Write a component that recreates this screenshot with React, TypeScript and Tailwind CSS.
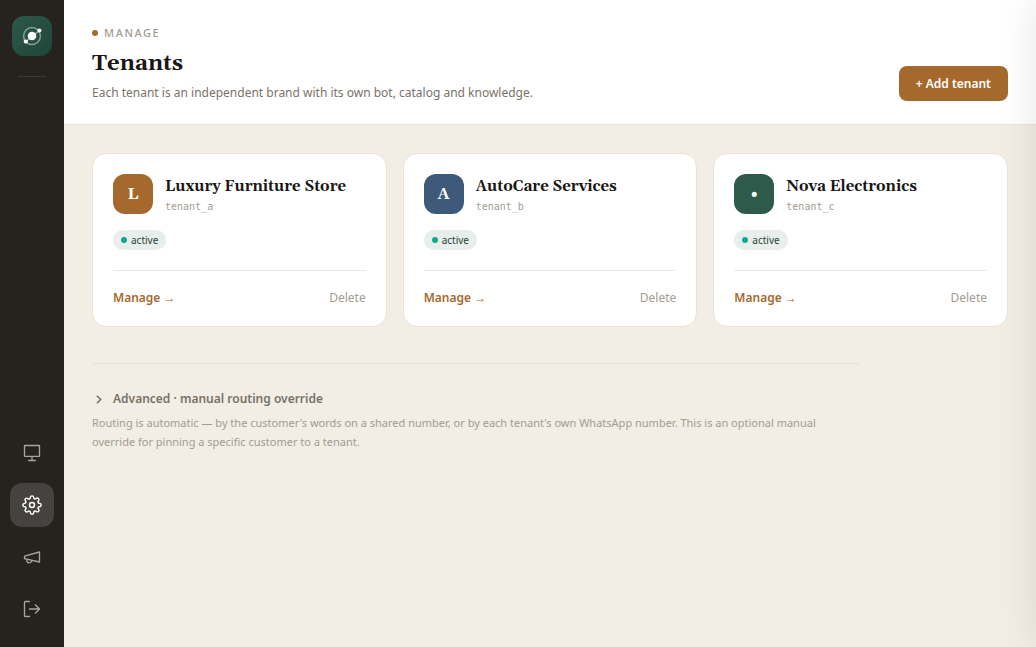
import { useState } from "react";
import { FiSettings } from "react-icons/fi";

type Tenant = {
  id: string;
  name: string;
  initial: string;
  color: string;
};

const tenants: Tenant[] = [
  { id: "tenant_a", name: "Luxury Furniture Store", initial: "L", color: "bg-[#a5692d]" },
  { id: "tenant_b", name: "AutoCare Services", initial: "A", color: "bg-[#3d5a7a]" },
  { id: "tenant_c", name: "Nova Electronics", initial: "•", color: "bg-[#2d5a4a]" },
];

const serif = "font-['Gelasio','Georgia','DejaVu_Serif',serif]";

const iconProps = {
  width: 20,
  height: 20,
  viewBox: "0 0 24 24",
  fill: "none",
  stroke: "currentColor",
  strokeWidth: 1.6,
  strokeLinecap: "round" as const,
  strokeLinejoin: "round" as const,
  "aria-hidden": true,
};

const Logo = () => (
  <svg width="22" height="22" viewBox="0 0 22 22" fill="none" aria-hidden="true">
    <circle cx="11" cy="11" r="8.4" stroke="#fff" strokeOpacity="0.45" strokeWidth="1.5" />
    <path d="M5 16.5 18.5 5.5" stroke="#fff" strokeOpacity="0.6" strokeWidth="1.2" />
    <circle cx="11" cy="11" r="4.3" fill="#fff" />
    <circle cx="18.4" cy="5.5" r="2.1" fill="#fff" />
    <circle cx="4.8" cy="16.6" r="2.1" fill="#fff" />
  </svg>
);

const Sidebar = () => {
  const item = "flex size-11 items-center justify-center rounded-xl text-[#a8a49c]";

  return (
    <aside className="flex w-16 shrink-0 flex-col items-center bg-[#26221d] py-4">
      <a
        href="#home"
        aria-label="Home"
        className="flex size-10 items-center justify-center rounded-xl bg-linear-to-br from-[#2d5a4a] to-[#1f4538]"
      >
        <Logo />
      </a>
      <div className="mt-5 h-px w-7 bg-white/10" />

      <nav className="mt-auto flex flex-col gap-2">
        <a href="#inbox" aria-label="Inbox" className={item}>
          <svg {...iconProps}>
            <rect x="3" y="3" width="18" height="13" rx="0.5" />
            <path d="M12 16v5M8 21h8" />
          </svg>
        </a>
        <a
          href="#manage"
          aria-label="Manage"
          aria-current="page"
          className="flex size-11 items-center justify-center rounded-xl bg-[#454340] text-white"
        >
          <FiSettings size={20} strokeWidth={1.7} />
        </a>
        <a href="#campaigns" aria-label="Campaigns" className={item}>
          <svg {...iconProps}>
            <path d="m3 11 18-5v12L3 14v-3z" />
            <path d="M11.6 16.8a3 3 0 1 1-5.8-1.6" />
          </svg>
        </a>
        <button type="button" aria-label="Log out" className={item}>
          <svg {...iconProps}>
            <path d="M9 21H4a1 1 0 0 1-1-1V4a1 1 0 0 1 1-1h5" />
            <path d="M9 12h12M16 7l5 5-5 5" />
          </svg>
        </button>
      </nav>
    </aside>
  );
};

const TenantCard = ({ tenant }: { tenant: Tenant }) => (
  <article className="rounded-[14px] border border-[#e9e3d8] bg-white p-5">
    <div className="flex gap-3">
      <div
        className={`flex size-10 shrink-0 items-center justify-center rounded-xl text-base font-bold text-white ${serif} ${tenant.color}`}
      >
        {tenant.initial}
      </div>
      <div className="min-w-0 pt-0.5">
        <h2 className={`truncate text-[15px] leading-[22px] font-bold text-[#1a1714] ${serif}`}>
          {tenant.name}
        </h2>
        <p className="font-['DejaVu_Sans_Mono',monospace] text-[10px] leading-[18px] text-[#a39c91]">
          {tenant.id}
        </p>
      </div>
    </div>

    <div className="mt-3.5 flex">
      <span className="flex h-5 items-center gap-1 rounded-full bg-[#e7eeeb] px-2 text-[10px] text-[#1f4538]">
        <span className="size-1.5 rounded-full bg-[#14a88a]" />
        active
      </span>
    </div>

    <div className="mt-5 flex items-center justify-between border-t border-[#ece9e0] pt-[18px] text-xs leading-[17px]">
      <a href={`#${tenant.id}`} className="font-semibold text-[#a5692d]">
        Manage →
      </a>
      <button type="button" className="text-[#a39c91]">
        Delete
      </button>
    </div>
  </article>
);

const App = () => {
  const [open, setOpen] = useState(false);

  return (
    <div className="flex min-h-screen overflow-x-hidden bg-[#f2ede5] font-['Segoe_UI','Noto_Sans',sans-serif]">
      <Sidebar />

      <div className="min-w-0 flex-1">
        <header className="flex items-end justify-between border-b border-[#e9e3d8] bg-white px-7 pt-[25px] pb-[23px]">
          <div>
            <p className="flex items-center gap-1.5 text-[11px] leading-4 font-medium tracking-[0.14em] text-[#a39c91]">
              <span className="size-1.5 rounded-full bg-[#a5692d]" />
              MANAGE
            </p>
            <h1 className={`mt-2 text-[22px] leading-[30px] font-bold text-[#1a1714] ${serif}`}>
              Tenants
            </h1>
            <p className="mt-1.5 text-xs leading-4 text-[#7a7268]">
              Each tenant is an independent brand with its own bot, catalog and knowledge.
            </p>
          </div>
          <button
            type="button"
            className="rounded-lg bg-[#a5692d] px-[17px] py-[9px] text-xs leading-[17px] font-semibold text-white"
          >
            + Add tenant
          </button>
        </header>

        <main className="px-7 py-7">
          <div className="grid grid-cols-3 gap-4">
            {tenants.map((tenant) => (
              <TenantCard key={tenant.id} tenant={tenant} />
            ))}
          </div>

          <section className="mt-9 max-w-3xl border-t border-[#e9e3d8] pt-[25px]">
            <button
              type="button"
              aria-expanded={open}
              onClick={() => setOpen(!open)}
              className="flex items-center gap-2 text-xs leading-5 font-semibold text-[#7a7268]"
            >
              <svg width="13" height="13" viewBox="0 0 24 24" fill="none" stroke="currentColor" strokeWidth="3" aria-hidden="true">
                <path d="m9 5 7 7-7 7" />
              </svg>
              Advanced · manual routing override
            </button>
            <p className="mt-1 text-[11px] leading-[19px] text-[#a39c91]">
              Routing is automatic — by the customer's words on a shared number, or by each tenant's own
              WhatsApp number. This is an optional manual override for pinning a specific customer to a tenant.
            </p>
          </section>
        </main>
      </div>

      {/* closed drawer, parked past the right edge */}
      <div className="fixed inset-y-0 left-full w-96 bg-white shadow-[0_0_40px_rgba(0,0,0,0.1)]" />
    </div>
  );
};

export default App;
